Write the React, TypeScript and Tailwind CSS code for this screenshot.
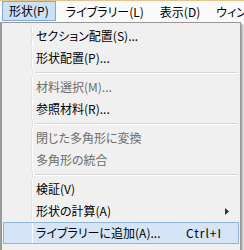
import React from "react";

type Item =
  | { kind: "sep" }
  | {
      kind: "item";
      label: string;
      disabled?: boolean;
      shortcut?: string;
      submenu?: boolean;
      active?: boolean;
    };

const menuBar = ["形状(P)", "ライブラリー(L)", "表示(D)", "ウィンドウ(W)"];

const items: Item[] = [
  { kind: "item", label: "セクション配置(S)..." },
  { kind: "item", label: "形状配置(P)..." },
  { kind: "sep" },
  { kind: "item", label: "材料選択(M)...", disabled: true },
  { kind: "item", label: "参照材料(R)..." },
  { kind: "sep" },
  { kind: "item", label: "閉じた多角形に変換", disabled: true },
  { kind: "item", label: "多角形の統合", disabled: true },
  { kind: "sep" },
  { kind: "item", label: "検証(V)" },
  { kind: "item", label: "形状の計算(A)", submenu: true },
  { kind: "item", label: "ライブラリーに追加(A)...", shortcut: "Ctrl+I", active: true },
];

const App = () => {
  return (
    <div
      className="w-[244px] h-[250px] overflow-hidden bg-white text-[12px] leading-none text-black [font-feature-settings:'palt']"
      style={{ fontFamily: '"Noto Sans CJK JP", "Noto Sans", sans-serif' }}
    >
      {/* menubar */}
      <div className="h-[22px] border-t border-[#e3c48e] bg-[#fafafa] flex items-stretch pl-[2px] overflow-hidden">
        {menuBar.map((m, i) => (
          <div
            key={m}
            className={
              i === 0
                ? "flex items-center px-[6px] mb-[1px] mr-[2px] border border-[#7fa8dc] bg-[#cce1f6] whitespace-nowrap"
                : "flex items-center px-[7px] border border-transparent whitespace-nowrap"
            }
          >
            {m}
          </div>
        ))}
      </div>

      <div className="flex">
        <div className="w-[1px] h-[230px] bg-[#9c9c9c]" />
        {/* dropdown */}
        <div className="w-[240px] border border-[#979797] bg-[#f0f0f0] pt-[2px] pb-[1px] px-[1px] shadow-[2px_2px_2px_rgba(0,0,0,0.35)]">
          {items.map((it, i) =>
            it.kind === "sep" ? (
              <div key={i} className="flex h-[7px]">
                <div className="w-[30px] border-r border-[#e2e3e3] shadow-[1px_0_0_#fff]" />
                <div className="flex-1 flex flex-col justify-center pl-[2px] pr-[1px]">
                  <div className="h-[1px] bg-[#d7d7d7]" />
                  <div className="h-[1px] bg-white" />
                </div>
              </div>
            ) : (
              <div
                key={i}
                className={`flex h-[22px] items-center border ${
                  it.active ? "border-[#8fb5e0] bg-[#d5e5f7]" : "border-transparent"
                } ${it.disabled ? "text-[#6d6d6d]" : "text-black"}`}
              >
                <div className="w-[28px] self-stretch border-r border-[#e2e3e3] shadow-[1px_0_0_#fff]" />
                <div className="flex-1 pl-[4px] whitespace-nowrap">{it.label}</div>
                {it.shortcut && (
                  <div className="pr-[16px] tracking-[1px] [font-feature-settings:normal]">{it.shortcut}</div>
                )}
                {it.submenu && (
                  <svg width="4" height="7" viewBox="0 0 4 7" className="mr-[9px]">
                    <path d="M0 0 L4 3.5 L0 7 Z" fill="#333" />
                  </svg>
                )}
              </div>
            )
          )}
        </div>
      </div>
    </div>
  );
};

export default App;
